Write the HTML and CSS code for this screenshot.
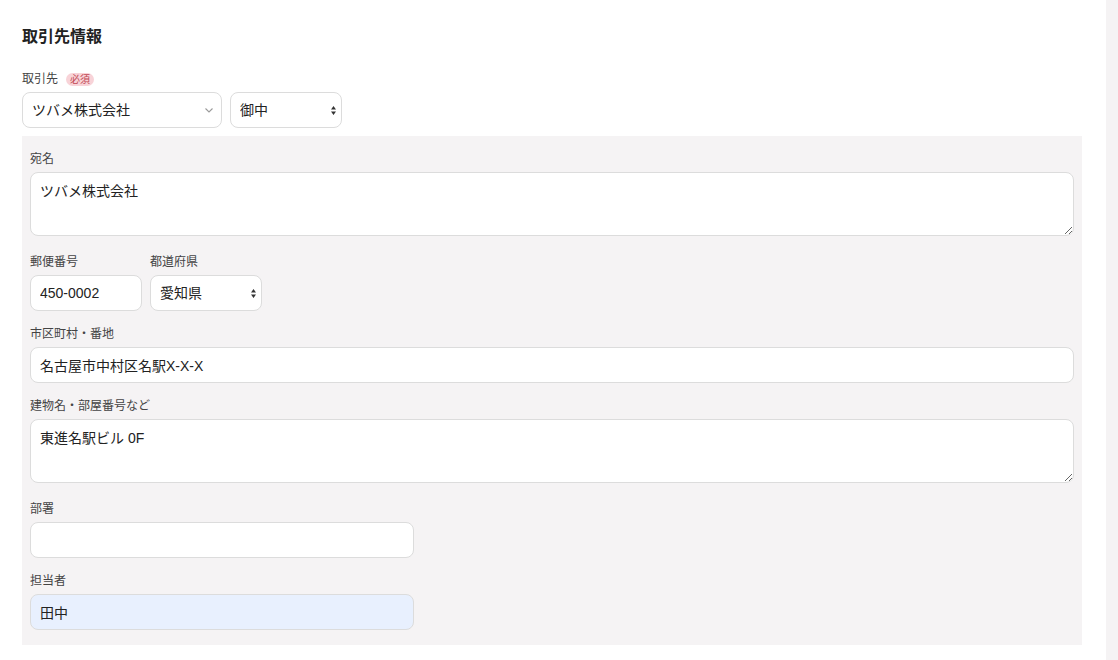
FILE: index.html
```html
<!DOCTYPE html>
<html lang="ja">
<head>
<meta charset="utf-8">
<title>取引先情報</title>
<link rel="stylesheet" href="styles.css">
</head>
<body>
<div class="page">
  <main class="main">
    <h2 class="title">取引先情報</h2>
    <div class="field">
      <div class="label">取引先<span class="badge">必須</span></div>
      <div class="row">
        <div class="select-wrap w200">
          <select class="control select"><option>ツバメ株式会社</option></select>
          <svg class="chevron" width="8" height="5" viewBox="0 0 8 5"><path d="M0.5 0.5 L4 4 L7.5 0.5" fill="none" stroke="#9a9a9a" stroke-width="1.1"/></svg>
        </div>
        <div class="select-wrap w112">
          <select class="control select"><option>御中</option></select>
          <svg class="updown" width="5" height="9" viewBox="0 0 5 9"><path d="M2.5 0 L5 3.4 L0 3.4 Z M2.5 9 L5 5.6 L0 5.6 Z" fill="#333"/></svg>
        </div>
      </div>
    </div>

    <section class="panel">
      <div class="field field-area">
        <div class="label">宛名</div>
        <textarea class="control area">ツバメ株式会社</textarea>
      </div>

      <div class="row">
        <div class="field">
          <div class="label">郵便番号</div>
          <input class="control w112" type="text" value="450-0002">
        </div>
        <div class="field">
          <div class="label">都道府県</div>
          <div class="select-wrap w112">
            <select class="control select"><option>愛知県</option></select>
            <svg class="updown" width="5" height="9" viewBox="0 0 5 9"><path d="M2.5 0 L5 3.4 L0 3.4 Z M2.5 9 L5 5.6 L0 5.6 Z" fill="#333"/></svg>
          </div>
        </div>
      </div>

      <div class="field">
        <div class="label">市区町村・番地</div>
        <input class="control" type="text" value="名古屋市中村区名駅X-X-X">
      </div>

      <div class="field field-area">
        <div class="label">建物名・部屋番号など</div>
        <textarea class="control area">東進名駅ビル 0F</textarea>
      </div>

      <div class="field">
        <div class="label">部署</div>
        <input class="control w384" type="text" value="">
      </div>

      <div class="field">
        <div class="label">担当者</div>
        <input class="control w384 filled" type="text" value="田中">
      </div>
    </section>
  </main>
  <aside class="rail"></aside>
</div>
</body>
</html>
```

FILE: styles.css
```css
* { box-sizing: border-box; }

html, body {
  margin: 0;
  padding: 0;
  background: #ffffff;
}

body {
  font-family: "Liberation Sans", "Noto Sans CJK JP", sans-serif;
  color: #222;
}

.page {
  display: flex;
  height: 660px;
  overflow: hidden;
}

.main {
  flex: 1;
  padding: 25px 24px 0 22px;
}

.rail {
  width: 12px;
  background: #f5f3f4;
}

.title {
  margin: 0 0 21px;
  font-size: 16px;
  line-height: 24px;
  font-weight: 700;
  color: #222;
}

.field {
  display: flex;
  flex-direction: column;
}

.label {
  display: flex;
  align-items: center;
  font-size: 12px;
  line-height: 18px;
  color: #444;
  margin-bottom: 4px;
}

.badge {
  margin-left: 8px;
  padding: 0 4px;
  font-size: 10px;
  line-height: 13px;
  border-radius: 7px;
  background: #f8d3d8;
  color: #c24a55;
}

.row {
  display: flex;
  gap: 8px;
}

.control {
  display: block;
  width: 100%;
  height: 36px;
  margin: 0;
  padding: 0 9px 1px;
  border: 1px solid #dcdcdc;
  border-radius: 8px;
  background: #ffffff;
  font-family: "Liberation Sans", "Noto Sans CJK JP", sans-serif;
  font-size: 14px;
  color: #222;
  outline: none;
}

.select {
  appearance: none;
  -webkit-appearance: none;
  padding-right: 24px;
}

.select-wrap {
  position: relative;
}

.chevron {
  position: absolute;
  right: 9px;
  top: 16px;
  pointer-events: none;
}

.updown {
  position: absolute;
  right: 6px;
  top: 14px;
  pointer-events: none;
}

.w200 { width: 200px; }
.w112 { width: 112px; }
.w384 { width: 384px; }

.area {
  height: 64px;
  padding: 8px 9px;
  line-height: 21px;
  margin-bottom: 3px;
}

.filled {
  background: #e8f0fe;
}

.panel {
  margin-top: 8px;
  padding: 14px 8px 15px;
  background: #f5f3f4;
  display: flex;
  flex-direction: column;
  gap: 14px;
}
```
